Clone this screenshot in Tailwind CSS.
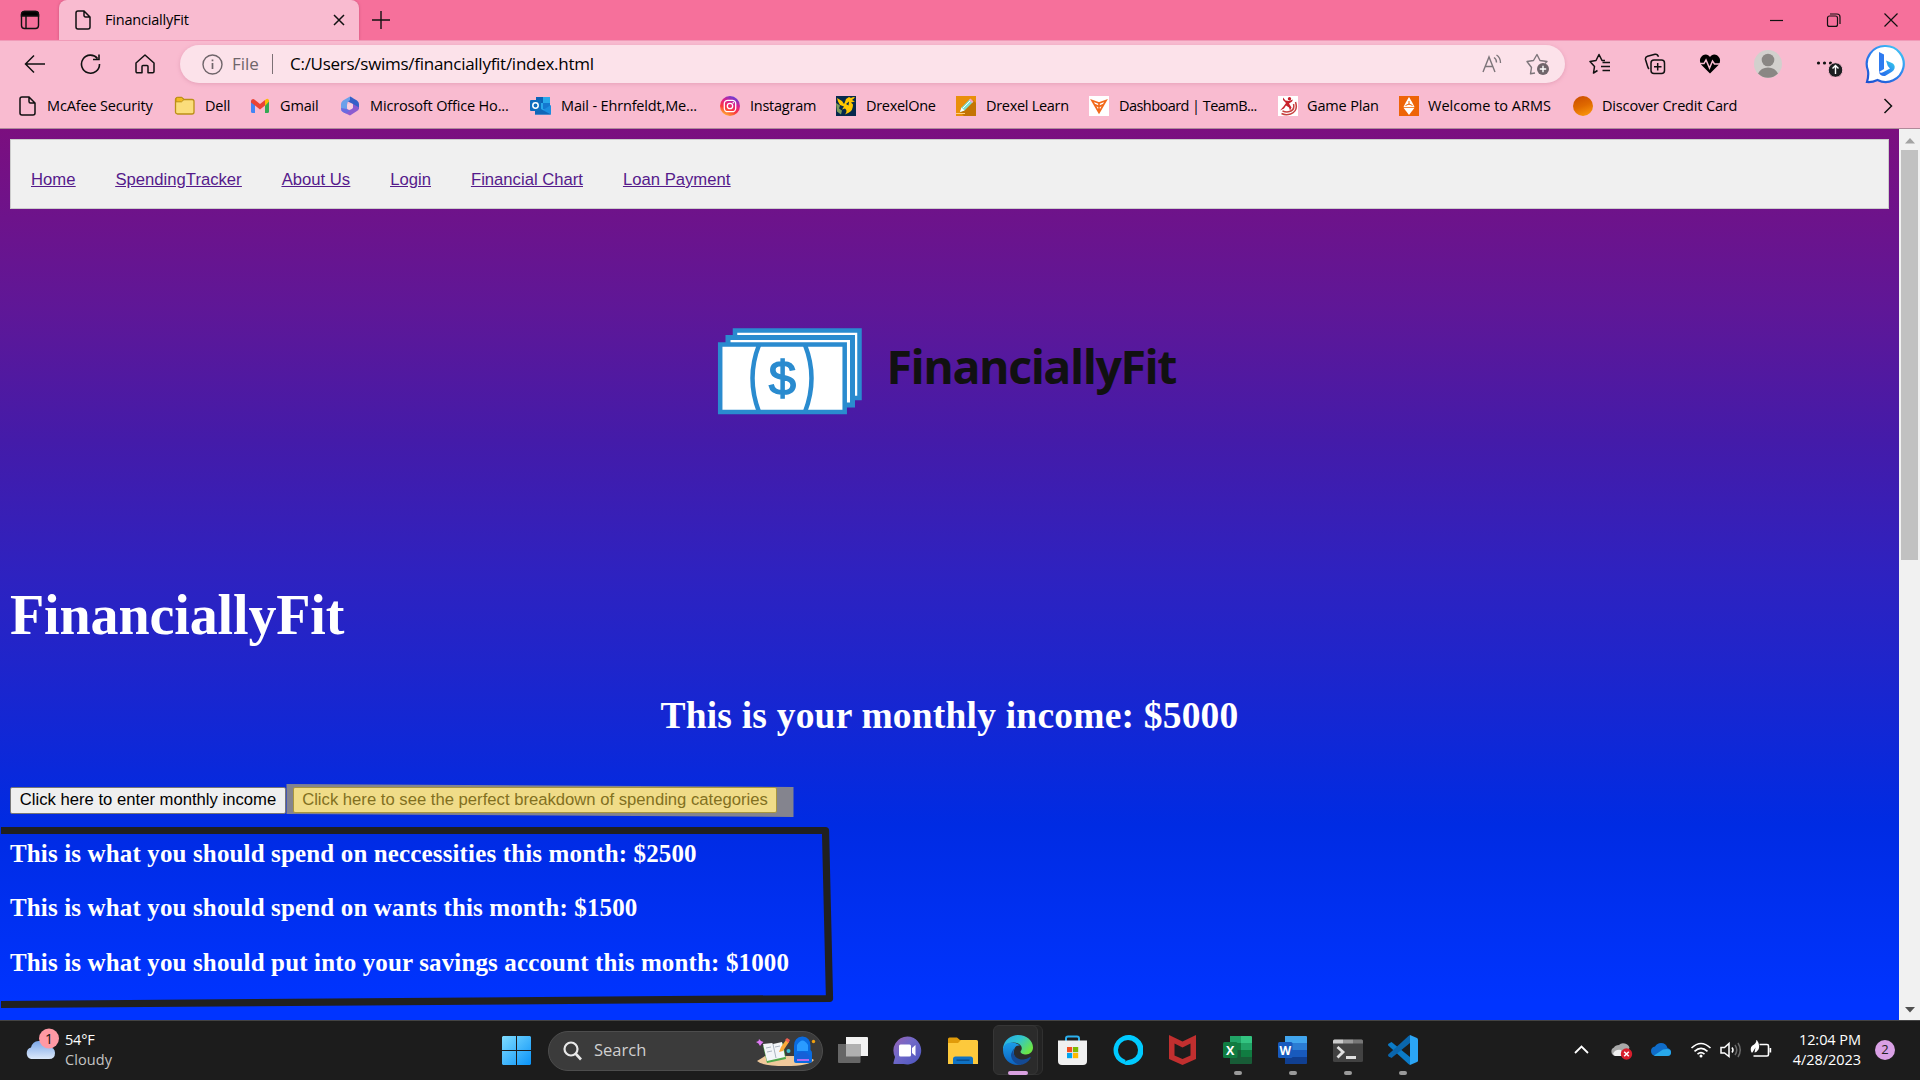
<!DOCTYPE html>
<html lang="en">
<head>
<meta charset="utf-8">
<title>FinanciallyFit</title>
<script src="https://cdn.jsdelivr.net/npm/@tailwindcss/browser@4"></script>
</head>
<body class="w-[1920px] h-[1080px] overflow-hidden flex flex-col font-['Open_Sans',sans-serif] text-black">

<!-- Tab strip -->
<header class="h-10 shrink-0 flex items-center bg-[#f6709b]">
  <div class="w-[59px] flex justify-center pl-px">
    <svg width="20" height="20" viewBox="0 0 20 20" fill="none" stroke="#111" stroke-width="1.4"><rect x="1.5" y="1.5" width="17" height="17" rx="3"/><path d="M1.5 6V4.500a3 3 0 0 1 3-3h11a3 3 0 0 1 3 3V6z" fill="#000"/><path d="M6 6v12.500"/></svg>
  </div>
  <div class="w-[300px] h-full flex items-center bg-[#f9bbd0] rounded-t-lg pl-4 pr-[13px] shadow-[0_0_3px_#c8557a]">
    <svg width="16" height="20" viewBox="0 0 16 20" fill="none" stroke="#111" stroke-width="1.5"><path d="M3 1h6l6 6v10a2 2 0 0 1-2 2H3a2 2 0 0 1-2-2V3a2 2 0 0 1 2-2zM9 1v4.500a1.500 1.500 0 0 0 1.500 1.500H15"/></svg>
    <span class="ml-[14px] text-[14.5px] grow tracking-[-0.2px] pb-px">FinanciallyFit</span>
    <svg width="14" height="12" viewBox="0 0 14 12" stroke="#111" stroke-width="1.5"><path d="M2 1l10 10M12 1L2 11"/></svg>
  </div>
  <svg class="ml-[13px]" width="18" height="18" viewBox="0 0 18 18" stroke="#111" stroke-width="1.4"><path d="M9 0v18M0 9h18"/></svg>
  <div class="ml-auto flex items-center">
    <svg class="w-[57px]" height="14" viewBox="0 0 57 14" stroke="#111" stroke-width="1.2"><path d="M22 7.500h13"/></svg>
    <svg class="w-[57px]" height="14" viewBox="0 0 57 14" fill="none" stroke="#111" stroke-width="1.2"><rect x="22.500" y="3" width="10" height="10.400" rx="2"/><path d="M25 1h7a3 3 0 0 1 3 3v7"/></svg>
    <svg class="w-[58px]" height="14" viewBox="0 0 58 14" stroke="#111" stroke-width="1.2"><path d="M22.500 .5l13 13M35.500 .5l-13 13"/></svg>
  </div>
</header>

<!-- Toolbar and bookmarks -->
<div class="h-[89px] shrink-0 bg-[#f9bbd0] border-t border-t-[#f09bb8] border-b border-b-[#b08a9a] flex flex-col">
  <div class="h-[46px] flex items-center">
    <div class="w-[180px] pl-[24px] flex items-center gap-[34.500px]">
      <svg width="21" height="20" viewBox="0 0 21 20" fill="none" stroke="#111" stroke-width="1.5"><path d="M21 10H1.500M10 1.500L1.500 10l8.500 8.500"/></svg>
      <svg width="21" height="20" viewBox="0 0 21 20" fill="none" stroke="#111" stroke-width="1.6"><path d="M17.500 4.500A9 9 0 1 0 19.500 10M19 .5v5h-6"/></svg>
      <svg width="20" height="20" viewBox="0 0 20 20" fill="none" stroke="#111" stroke-width="1.5"><path d="M1 9L10 1l9 8v8.500a1.200 1.200 0 0 1-1.200 1.200H13V12.500a1 1 0 0 0-1-1H8a1 1 0 0 0-1 1v6.200H2.200A1.200 1.200 0 0 1 1 17.500z" stroke-linejoin="round"/></svg>
    </div>
    <div class="w-[1385px] h-[38px] rounded-full bg-[#fce2ea] shadow-[0_1px_4px_#e5a0b8] flex items-center pl-[22px] pr-[15px] text-[17px]">
      <svg width="21" height="21" viewBox="0 0 21 21" fill="none" stroke="#6f656a" stroke-width="1.4"><circle cx="10.500" cy="10.500" r="9.500"/><path d="M10.500 9v6M10.500 5.500v1.800" stroke-width="1.700"/></svg>
      <span class="ml-[9px] w-[40px] text-[#6f656a]">File</span>
      <span class="w-px h-5 bg-[#7c7075]"></span>
      <span class="ml-[17px] tracking-[-0.27px]">C:/Users/swims/financiallyfit/index.html</span>
      <svg class="ml-auto" width="20" height="20" viewBox="0 0 20 20" fill="none" stroke="#7d757a" stroke-width="1.4"><path d="M1 18L7 3l6 15M3.300 12.500h7.500M12 3.500q2.500 1.500 2.500 5M14.500 1q4 2.500 4 8"/></svg>
      <svg class="ml-[24px]" width="24" height="22" viewBox="0 0 24 22" fill="none" stroke="#7d757a" stroke-width="1.4"><path d="M9 20l-4.500 .8 1-6.300L1 8.500l6.500-1L11 1.500l3 6 7 1-2 2" stroke-linejoin="round"/><circle cx="17" cy="16" r="6" fill="#6f656a" stroke="none"/><path d="M17 12.800v6.400M13.800 16h6.400" stroke="#fff"/></svg>
    </div>
    <div class="grow flex items-center">
      <svg class="ml-[24px]" width="22" height="22" viewBox="0 0 22 22" fill="none" stroke="#111" stroke-width="1.5"><path d="M8.500 17.500l-4 2.500 1-6.500L1 8.500l6-1L10 1.500l3 6h3M13.500 9.500H21M12 13.500h9M13.500 17.500H21" stroke-linejoin="round"/></svg>
      <svg class="ml-[33px]" width="22" height="22" viewBox="0 0 22 22" fill="none" stroke="#111" stroke-width="1.5"><rect x="7" y="7" width="13.500" height="13.500" rx="3"/><path d="M13.700 10v7.500M10 13.700h7.500M5 16Q4 15 3.500 13L1.500 6.500Q1 4 3.500 3.300L11 1.300q2.500-.5 3.500 2.500"/></svg>
      <svg class="ml-[33px]" width="22" height="20" viewBox="0 0 22 20"><path d="M11 19.500L2.500 11Q0 7.500 1.500 4C4-.5 9-.5 11 3c2-3.500 7-3.500 9.500 1q1.500 3.500-1 7z"/><path d="M0 9.500h5l2-3.500 3.500 8 3-7 2 3H22" fill="none" stroke="#f9bbd0" stroke-width="1.500"/></svg>
      <svg class="ml-[33px]" width="28" height="28" viewBox="0 0 28 28"><circle cx="14" cy="14" r="14" fill="#d2d0cd"/><circle cx="14" cy="10" r="6.300" fill="#8a8784"/><path d="M4 23.500Q7 17.500 14 17.500t10 6A14 14 0 0 1 4 23.500z" fill="#8a8784"/></svg>
      <svg class="ml-[34px]" width="27" height="26" viewBox="0 0 27 26"><g fill="#111"><circle cx="2.500" cy="12" r="1.600"/><circle cx="8.500" cy="12" r="1.600"/><circle cx="14.500" cy="12" r="1.600"/></g><circle cx="19.500" cy="19" r="7.300" fill="#1d1f22" stroke="#f9bbd0"/><path d="M19.500 23v-8M16.500 17.500l3-3 3 3" stroke="#fff" stroke-width="1.400" fill="none"/></svg>
      <svg class="ml-[22px]" width="40" height="40" viewBox="0 0 40 40"><defs><linearGradient id="bg1" x1="0" y1="1" x2=".8" y2="0"><stop offset="0" stop-color="#1a4fd0"/><stop offset=".6" stop-color="#2f86f0"/><stop offset="1" stop-color="#3fc4f5"/></linearGradient><linearGradient id="bg2" x1="0" y1="1" x2="1" y2="0"><stop offset="0" stop-color="#2466e8"/><stop offset=".5" stop-color="#2c8df0"/><stop offset="1" stop-color="#35d3e8"/></linearGradient></defs><path d="M20.500 2a18 18 0 1 1-8 34Q7 38.500 2 38q2-7 .8-12A18 18 0 0 1 20.500 2z" fill="#fff" stroke="url(#bg1)" stroke-width="2.200"/><path d="M14 8l5 2.500V25l-5 3z" fill="#2f7bf0"/><path d="M21 16.500l6 2.500q3.500 2 2.500 5.500-.5 2-2.500 3.200L20 32q-5 .5-6-4 2 1.500 4.500 0L25 24.500 22.800 22z" fill="url(#bg2)"/></svg>
    </div>
  </div>
  <div class="h-[38px] pl-[18px] flex items-center text-[14.5px] whitespace-nowrap tracking-[-0.16px]">
    <div class="w-[156px] flex items-center gap-[9px]"><svg width="20" height="20" viewBox="0 0 20 20" fill="none" stroke="#111" stroke-width="1.500"><path d="M4 1h7l6 6v10a2 2 0 0 1-2 2H4a2 2 0 0 1-2-2V3a2 2 0 0 1 2-2zM11 1v4.500a1.500 1.500 0 0 0 1.500 1.500H17"/></svg>McAfee Security</div>
    <div class="w-[76px] flex items-center gap-[10px]"><svg width="21" height="20" viewBox="0 0 21 20"><path d="M1.500 3.500a2 2 0 0 1 2-2h4l2.500 2h8a2 2 0 0 1 2 2V16a2 2 0 0 1-2 2h-14.500a2 2 0 0 1-2-2z" fill="#fbdd7b" stroke="#bc9017" stroke-width="1.300"/><path d="M2 5.800h5.500L10 3.500 7.500 1.500h-4Q2 1.500 2 3z" fill="#f3b820" stroke="#bc9017"/></svg>Dell</div>
    <div class="w-[90px] flex items-center gap-[10px]"><svg width="20" height="20" viewBox="0 0 20 20"><path d="M1 4.500h4V17H2.500A1.500 1.500 0 0 1 1 15.500z" fill="#4285f4"/><path d="M15 4.500h4v11a1.500 1.500 0 0 1-1.500 1.500H15z" fill="#34a853"/><path d="M1 5.500Q1 3 3 3q1 0 2 1l5 4 5-4v5.500l-5 4-5-4-4-3z" fill="#ea4335"/><path d="M15 4q4-3 4 1.500L15 10z" fill="#fbbc04"/></svg>Gmail</div>
    <div class="w-[190px] flex items-center gap-[10px]"><svg width="20" height="20" viewBox="0 0 20 20"><path d="M10 .5L3 4.500Q1 6 1 8v5q0 2 2 3l4 1.500V9q0-3 2-4l4-3z" fill="#6ba0ea"/><path d="M10 .5l7 4Q19 6 19 8v5l-6-2V8L8 5.500 10 4z" fill="#3560c8"/><path d="M19 11.500q0 2.500-2 3.500l-7 4.500L3 16l6-1.500 4-3V8z" fill="#8b5cd0"/><path d="M1 12l6 1 3 1.500-4 3L3 16q-2-1-2-4z" fill="#6a6ae0"/><circle cx="10" cy="10.500" r="3" fill="#f9cfe0"/></svg>Microsoft Office Ho...</div>
    <div class="w-[190px] flex items-center gap-[10px]"><svg width="21" height="20" viewBox="0 0 21 20"><rect x="6" y="1" width="14" height="13" fill="#28a8ea"/><path d="M6 1h7v6H6z" fill="#0a63b8"/><path d="M13 7h7v6h-7z" fill="#1478d0"/><path d="M5 9l8 5 8-5v9.500H5z" fill="#1b8ee0"/><path d="M5 10l16 8.500H5z" fill="#1066b8"/><rect y="4" width="11" height="11" rx="1" fill="#0f6cbd"/><circle cx="5.500" cy="9.500" r="2.700" fill="none" stroke="#fff" stroke-width="1.500"/></svg>Mail - Ehrnfeldt,Me...</div>
    <div class="w-[116px] flex items-center gap-[10px] tracking-[-0.25px]"><svg width="20" height="20" viewBox="0 0 20 20"><defs><linearGradient id="ig" x1=".2" y1="1" x2=".7" y2="0"><stop offset="0" stop-color="#ffc531"/><stop offset=".35" stop-color="#fb3a3a"/><stop offset=".65" stop-color="#e0218a"/><stop offset="1" stop-color="#5b3fe0"/></linearGradient></defs><circle cx="10" cy="10" r="10" fill="url(#ig)"/><rect x="4.300" y="4.300" width="11.400" height="11.400" rx="3.500" fill="none" stroke="#fff" stroke-width="1.300"/><circle cx="10" cy="10" r="2.700" fill="none" stroke="#fff" stroke-width="1.300"/><circle cx="13.300" cy="6.700" r=".8" fill="#fff"/></svg>Instagram</div>
    <div class="w-[120px] flex items-center gap-[10px] tracking-[-0.3px]"><svg width="20" height="20" viewBox="0 0 20 20"><path d="M0 0h20v20H0z" fill="#07294d"/><path d="M1 2l5 3 2 3 1-2 1-3 3-2 2 1q3-1.500 4-.5l-3 2.500 3 1.500-4 1 2 2q0 6-4 8l-4 2q3-4 0-6l-3 1 2-3-4-1.500-2-3.500z" fill="#ffc600"/><path d="M0 7l4 2.500-1 3 3 2-1 4-4-3z" fill="#7d9a5a"/><path d="M10 8l3-2.500-.5 4z" fill="#07294d"/></svg>DrexelOne</div>
    <div class="w-[133px] flex items-center gap-[10px] tracking-[-0.3px]"><svg width="20" height="20" viewBox="0 0 20 20"><path d="M0 0h20v20H0z" fill="#e98f0a"/><path d="M4 16L17 4l3 3v13H8z" fill="#c47403"/><path d="M4 16l1.500-4.500L14 3l3 3-8.500 8.500z" fill="#7fe0d0"/><path d="M13 4l1.500-1.500 3 3L16 7z" fill="#f3a5c8"/><path d="M7 12l7-7" stroke="#fff"/><path d="M4 16l1.500-4.500L8.500 14.500z" fill="#fff"/><path d="M0 17.500h9" stroke="#ffd080" stroke-width="1"/></svg>Drexel Learn</div>
    <div class="w-[189px] flex items-center gap-[10px] tracking-[-0.55px]"><svg width="20" height="20" viewBox="0 0 20 20"><path d="M0 0h20v20H0z" fill="#fff"/><path d="M3 4.500l7 2.500 7-2.500-7 12zM10 7v3.500M5.500 8.500l4.500 2 4.500-2M10 10.500v4" fill="none" stroke="#f26a1b" stroke-width="1.700"/></svg>Dashboard | TeamB...</div>
    <div class="w-[121px] flex items-center gap-[9px]"><svg width="20" height="20" viewBox="0 0 20 20"><path d="M0 0h20v20H0z" fill="#fff"/><circle cx="11.500" cy="2.800" r="1.700" fill="#c8202a"/><path d="M5 1.500l2.500 3L11 5l4-1.500-1 2-3 2 2.500 4-1.500 3-1-3-3-2-2 3-4 2 3.500-4L8 7 5 4z" fill="#c8202a"/><path d="M17.500 6q3 9-5 12-5 1.500-9-.5M15.500 8q1.500 6-4 7.500-3 1-7-.5" fill="none" stroke="#c8403f" stroke-width="1.500"/></svg>Game Plan</div>
    <div class="w-[174px] flex items-center gap-[9px] tracking-[0px]"><svg width="20" height="20" viewBox="0 0 20 20"><path d="M0 0h20v20H0z" fill="#ee6407"/><path d="M10 1l3 5 2.500 5H4.500L7 6z" fill="#fff"/><path d="M4.500 11.800h11L10 19z" fill="#fff"/><path d="M10 5v4M6.500 9.500L10 8l3.500 1.500" stroke="#ee6407" fill="none"/></svg>Welcome to ARMS</div>
    <div class="flex items-center gap-[9px]"><span class="w-5 h-5 rounded-full bg-linear-160 from-[#c94a00] via-[#e06a00] to-[#ffa010]"></span>Discover Credit Card</div>
    <svg class="ml-auto mr-[27px]" width="10" height="16" viewBox="0 0 10 16" fill="none" stroke="#111" stroke-width="1.500"><path d="M1.500 1l7 7-7 7"/></svg>
  </div>
</div>

<!-- Web page -->
<div class="h-[891px] shrink-0 flex">
  <main class="relative w-[1899px] px-[10px] pt-[10px] flex flex-col items-start text-white font-['Liberation_Serif',serif] font-bold bg-[linear-gradient(to_bottom,#7b0f7f_0%,#5f1797_20%,#441ba9_35%,#2e22c0_50%,#1f25cb_60%,#0a29db_72%,#002be3_78%,#0031f5_91%,#0034ff_98%)]">
    <nav class="w-full h-[70px] shrink-0 bg-[#f0f0f0] border border-[#ccc] pl-5 pt-[30px] flex gap-10 font-['Liberation_Sans',sans-serif] font-normal text-[16.67px] leading-5 text-[#551a8b] underline">
      <a>Home</a><a>SpendingTracker</a><a>About Us</a><a>Login</a><a>Financial Chart</a><a>Loan Payment</a>
    </nav>
    <svg class="mt-[119px] ml-[708px] shrink-0 overflow-visible" width="470" height="90" viewBox="0 0 470 90">
      <g fill="#fff" stroke="#2a8bcf" stroke-width="4.500">
        <path d="M17 2.500h124.500V70H17z"/>
        <path d="M10 9.500h124.500V77H10z" stroke-width="5"/>
        <path d="M2.200 16.500h124.500v67.500H2.200z"/>
        <path d="M41 17q-13 33 0 67M87 17q13 33 0 67" fill="none"/>
      </g>
      <text x="64.500" y="67" text-anchor="middle" font-family="Liberation Sans" font-weight="400" font-size="49" fill="#2a8bcf" stroke="#2a8bcf" stroke-width="1.500">$</text>
      <text x="168.500" y="56" textLength="291" lengthAdjust="spacing" font-family="Open Sans" font-weight="700" font-size="46.500" fill="#111">FinanciallyFit</text>
    </svg>
    <h1 class="mt-[165px] text-[56px] leading-[64px] h-16 tracking-[-0.12px]">FinanciallyFit</h1>
    <h2 class="mt-[48px] w-full text-center text-[37.5px] leading-[42px] tracking-[0.2px]">This is your monthly income: $5000</h2>
    <div class="mt-[50px] h-[27px] flex gap-[7px] font-['Liberation_Sans',sans-serif] font-normal text-[16.67px] leading-[22px]">
      <button class="w-[276px] bg-[#efefef] text-black border border-[#767676] rounded-xs whitespace-nowrap pb-[2px]">Click here to enter monthly income</button>
      <div class="relative">
        <svg class="absolute left-[-7px] top-[-3px]" width="508" height="34" viewBox="0 0 508 34"><path d="M.5 0l507 3v30L.5 30z" fill="#84848e"/></svg>
        <button class="relative w-[484px] h-[26px] bg-[#f0dc88] text-[#82701f] border border-[#a8963f] rounded-xs whitespace-nowrap pb-[1px]">Click here to see the perfect breakdown of spending categories</button>
      </div>
    </div>
    <div class="mt-[26px] flex flex-col gap-[26px] text-[25px] leading-[28px] tracking-[0.14px]">
      <h3>This is what you should spend on neccessities this month: $2500</h3>
      <h3>This is what you should spend on wants this month: $1500</h3>
      <h3 class="pt-px">This is what you should put into your savings account this month: $1000</h3>
    </div>
    <svg class="absolute left-0 top-[691px]" width="840" height="195" viewBox="0 0 840 195" fill="none" stroke="#202020" stroke-width="7.200" stroke-linejoin="round"><path d="M1 10.500L825.500 10.500 829.500 178.500 1 184.500"/></svg>
  </main>
  <div class="w-[21px] bg-[#f1f1f1] flex flex-col items-center">
    <svg class="h-[21px]" width="10" viewBox="0 0 10 21"><path d="M0 14.500L5 9l5 5.500z" fill="#a3a3a3"/></svg>
    <div class="w-[17px] h-[410px] bg-[#c1c1c1]"></div>
    <svg class="mt-auto h-[21px]" width="10" viewBox="0 0 10 21"><path d="M0 8h10l-5 5.500z" fill="#505050"/></svg>
  </div>
</div>

<!-- Taskbar -->
<footer class="h-[60px] shrink-0 bg-[#1c1c1c] border-t border-t-[#444] flex items-center text-white">
  <div class="w-[489px] pl-[25px] pb-[2px] flex items-center">
    <svg class="shrink-0 overflow-visible" width="35" height="40" viewBox="0 0 35 40"><defs><linearGradient id="cl" x1="0" y1="0" x2="0" y2="1"><stop offset="0" stop-color="#7ba7e8"/><stop offset="1" stop-color="#dbe8fa"/></linearGradient></defs><path d="M6 29a6 6 0 0 1 0-11.500Q8 10 15 11q6 0 8 6 7 0 7 6t-6 6z" fill="url(#cl)"/><circle cx="24" cy="8.500" r="10" fill="#ff99a4"/><text x="24" y="13.500" text-anchor="middle" font-size="14" font-family="Open Sans" fill="#111">1</text></svg>
    <div class="ml-[5px] text-[14.5px] leading-5 tracking-[-0.2px]"><div>54°F</div><div class="text-[#c4c4c4] tracking-[0.1px]">Cloudy</div></div>
  </div>
  <div class="w-[59px] pl-[13px]"><svg width="29" height="29" viewBox="0 0 29 29"><defs><linearGradient id="win" gradientUnits="userSpaceOnUse" x1="0" y1="0" x2="29" y2="29"><stop offset="0" stop-color="#7fdcff"/><stop offset="1" stop-color="#0a93f8"/></linearGradient></defs><path d="M1 0h13v14H0V1zM15 0h13l1 1v13H15zM0 15h14v14H1l-1-1zM15 15h14v13l-1 1H15z" fill="url(#win)"/></svg></div>
  <div class="w-[275px] h-10 rounded-full bg-[#3b3b3b] border border-[#4d4d4d] pl-[14px] pr-[6px] flex items-center">
    <svg width="20" height="20" viewBox="0 0 20 20" fill="none" stroke="#e8e8e8" stroke-width="2.200"><circle cx="8" cy="8" r="6.500"/><path d="M12.500 12.500l5.500 6" stroke-width="2.600"/></svg>
    <span class="ml-[11px] text-[16.5px] text-[#d0d0d0]">Search</span>
    <svg class="ml-auto" width="60" height="32" viewBox="0 0 60 32"><path d="M1 26l8-5h42l7 4q-5 6-28 6Q6 31 1 26z" fill="#f0c99b"/><path d="M3 4l2 2 2.500 1L5.500 9 4 11 2.500 8.500 0 7l2.500-1z" fill="#e07af5"/><path d="M7 11l20-3 3 16-19 4z" fill="#4fa84a"/><path d="M7 9l9-1 1 1 9-2 3 15-9 2-9 2z" fill="#f3f5f8"/><path d="M17 9l3 14M10 13l5-1M11 17l5-1M19 12l5-1" stroke="#aab4c0" fill="none"/><path d="M25 12l5-7 3 2-6 9-4 1z" fill="#f9a93a"/><path d="M29 5l2-2 3 2-1.500 3z" fill="#f06050"/><path d="M38 11Q38 2 46.500 1.500 54.500 2 54.500 11v4q1.500 1 1.500 3v8q0 2-2 2H40q-2 0-2-2z" fill="#0a6be0"/><path d="M41 10q5.500-9 11 0v6H41z" fill="#2a9bff"/><path d="M39.500 21q7-9 14 0v5h-14z" fill="#1560d8"/><path d="M41 25h12" stroke="#b06cf5" stroke-width="2"/><circle cx="57.500" cy="6.500" r="1.700" fill="#f0a010"/><circle cx="32.500" cy="16" r="2" fill="#3cc0d0"/></svg>
  </div>
  <div class="ml-[2px] pb-px h-full flex [&>div]:w-[55px] [&>div]:relative [&>div]:flex [&>div]:items-center [&>div]:justify-center">
    <div><svg width="30" height="28" viewBox="0 0 30 28"><path d="M8 1h21a1 1 0 0 1 1 1v18H8z" fill="#f2f2f2"/><path d="M0 8h22.500v18a1 1 0 0 1-1 1H1a1 1 0 0 1-1-1z" fill="#666"/><path d="M8 8h14.500v12.500H8z" fill="#b0b0b0"/></svg></div>
    <div><svg width="29" height="29" viewBox="0 0 29 29"><defs><linearGradient id="ch" x1="0" y1="0" x2="1" y2="1"><stop offset="0" stop-color="#9a60b0"/><stop offset=".4" stop-color="#7269c8"/><stop offset="1" stop-color="#4a55c0"/></linearGradient></defs><path d="M14.500 .5a14 14 0 1 1-4 27.500H1q-1 0-.5-1.500L2 21A14 14 0 0 1 14.500 .5z" fill="url(#ch)"/><rect x="6" y="8.500" width="12" height="12" rx="1.500" fill="#fff"/><path d="M19 12l3.500-3v11L19 17z" fill="#fff"/></svg></div>
    <div><svg width="30" height="27" viewBox="0 0 30 27"><path d="M0 2a1.500 1.500 0 0 1 1.500-1.500H9L12 3h11v6H0z" fill="#e09b0a"/><path d="M0 6h10l3-3h15.500A1.500 1.500 0 0 1 30 4.500V27H0z" fill="#fdc93c"/><path d="M5 27v-5q0-2.500 2.500-2.500h15q2.500 0 2.500 2.500v5z" fill="#0f72c4"/><path d="M8.500 23.200h13" stroke="#0a4c8c" stroke-width="1.500"/></svg></div>
    <div>
      <span class="absolute left-[9px] top-[4px] w-[44px] h-[50px] rounded-md bg-[#232323] border border-[#303030]"></span>
      <span class="absolute left-[3px] top-[4px] w-[45px] h-[50px] rounded-md bg-[#2b2b2b] border border-[#363636]"></span>
      <svg class="relative" width="30" height="30" viewBox="0 0 30 30"><defs><linearGradient id="eg1" x1="0" y1="0" x2="1" y2=".6"><stop offset="0" stop-color="#27a8e8"/><stop offset=".5" stop-color="#30c5d0"/><stop offset="1" stop-color="#6be545"/></linearGradient><linearGradient id="eg2" x1="0" y1="0" x2="0" y2="1"><stop offset="0" stop-color="#1b9de8"/><stop offset="1" stop-color="#0c62c0"/></linearGradient></defs><path d="M0 13C1 5 8 0 15 0c9 0 15 6 15 12.500 0 4-3 7-7 7-3 0-5.500-1.200-5.500-2.800 0-.8 1.300-1.200 1.300-3.700C18.500 9 12 6 6 8.500Q1.500 10.500 0 15z" fill="url(#eg1)"/><path d="M0 15C0 10 4 7 9 7.500q5 .5 8 3-5-.5-6 5-1 8 6 12.500L18 29.700Q16 30 15 30C7 30 0 24 0 15z" fill="url(#eg2)"/><path d="M10.700 15.500C9.500 22 16 25 20.500 24.500q3.500-.3 6.500-2.500 1 0 .7 1Q24 29.500 16 30 9 27 8 21 8 16 12.500 12.500q-1.500 1-1.800 3z" fill="#144a94"/></svg>
      <span class="absolute bottom-[4px] w-5 h-1 rounded-full bg-[#d9a0e0]"></span>
    </div>
    <div><svg width="29" height="30" viewBox="0 0 29 30"><path d="M8 7V3.500q0-2 2-2h9q2 0 2 2V7" fill="none" stroke="#2cb0ee" stroke-width="2"/><path d="M0 5.500h29V26a4 4 0 0 1-4 4H4a4 4 0 0 1-4-4z" fill="#f0f0f0"/><path d="M9 12h5.200v5.200H9z" fill="#f25022"/><path d="M15 12h5.200v5.200H15z" fill="#7fba00"/><path d="M9 18h5.200v5.200H9z" fill="#00a4ef"/><path d="M15 18h5.200v5.200H15z" fill="#ffb900"/></svg></div>
    <div><svg width="30" height="30" viewBox="0 0 30 30"><path d="M12.500 30v-3q0-1.500 3-2Q25 23 25 15A10 10 0 1 0 5 15q0 7 7.500 10v4.700A15 15 0 1 1 15 30z" fill="#00caff"/></svg></div>
    <div><svg width="27" height="30" viewBox="0 0 27 30"><path d="M0 0l13.500 6.500L27 0v24l-13.500 6L0 24zM5.500 8.500v12l8 3.500 8-3.500v-12l-8 4z" fill="#c12f2f" fill-rule="evenodd"/></svg></div>
    <div><svg width="29" height="28" viewBox="0 0 29 28"><path d="M7 0h11v7H7z" fill="#21a366"/><path d="M18 0h10q1 0 1 1v6H18z" fill="#33c481"/><path d="M7 7h11v7H7z" fill="#107c41"/><path d="M18 7h11v7H18z" fill="#21a366"/><path d="M7 14h11v7H7z" fill="#185c37"/><path d="M18 14h11v7H18z" fill="#107c41"/><path d="M7 21h22v6q0 1-1 1H7z" fill="#185c37"/><rect y="6" width="14.500" height="16" rx="1.500" fill="#107c41"/><text x="7.200" y="18.500" text-anchor="middle" font-family="Open Sans" font-weight="700" font-size="12.500" fill="#fff">X</text></svg><span class="absolute bottom-[4px] w-2 h-1 rounded-full bg-[#9a9a9a]"></span></div>
    <div><svg width="29" height="28" viewBox="0 0 29 28"><path d="M7 0h21q1 0 1 1v6H7z" fill="#41a5ee"/><path d="M7 7h22v7H7z" fill="#2b7cd3"/><path d="M7 14h22v7H7z" fill="#185abd"/><path d="M7 21h22v6q0 1-1 1H7z" fill="#103f91"/><rect y="6" width="14.500" height="16" rx="1.500" fill="#185abd"/><text x="7.300" y="18.500" text-anchor="middle" font-family="Open Sans" font-weight="700" font-size="12" fill="#fff">W</text></svg><span class="absolute bottom-[4px] w-2 h-1 rounded-full bg-[#9a9a9a]"></span></div>
    <div><svg width="30" height="23" viewBox="0 0 30 23"><rect y=".5" width="30" height="22.500" rx="1.500" fill="#424242"/><path d="M0 4.500V2Q0 .5 1.500 .5H10v4z" fill="#ccc"/><path d="M10 .5h10v4H10z" fill="#999"/><path d="M20 .5h8.500Q30 .5 30 2v2.500H20z" fill="#777"/><path d="M4.500 8l5.500 5-5.500 5.500M13 18.500h10" fill="none" stroke="#e0e0e0" stroke-width="2.800"/></svg><span class="absolute bottom-[4px] w-2 h-1 rounded-full bg-[#9a9a9a]"></span></div>
    <div><svg width="30" height="30" viewBox="0 0 30 30"><path d="M22 22L3.500 7 .5 8.800q-1 1 0 2L20.500 29 22 30z" fill="#0b7bc8"/><path d="M22 8L3.500 23 .5 21.200q-1-1 0-2L20.500 1 22 0z" fill="#0a66ad"/><path d="M22 0l7 3q1 .5 1 1.500V25.500q0 1-1 1.500l-7 3z" fill="#2ba5f5"/></svg><span class="absolute bottom-[4px] w-2 h-1 rounded-full bg-[#9a9a9a]"></span></div>
  </div>
  <div class="ml-auto pr-[25px] pb-px flex items-center">
    <svg class="w-10" height="20" viewBox="0 0 40 20" fill="none" stroke="#fff" stroke-width="1.800"><path d="M14 13l6.500-6.500L27 13"/></svg>
    <svg class="w-10" height="20" viewBox="0 0 40 20"><path d="M14 16a4.500 4.500 0 0 1-1-8.500Q14 5 18 5q2-2.500 6-1.500 4 1 4.500 4.500L22 16z" fill="#a8a8a8"/><path d="M12 14q2-5 8-4l2 6h-8z" fill="#f0f0f0"/><circle cx="25.500" cy="14" r="5.700" fill="#d81e2c"/><path d="M23.200 11.700l4.600 4.600M27.800 11.700l-4.600 4.600" stroke="#fff" stroke-width="1.500"/></svg>
    <svg class="w-10" height="20" viewBox="0 0 40 20"><path d="M10 11q0-4 4-4.500Q16 3 20 3q5 0 6.500 5Q30 9 30 12q0 4-4 4H14q-4-1-4-5z" fill="#0f6cc9"/><path d="M13 15.500L22 9.500q8-2 8 3 0 3.500-4 3.500H14z" fill="#28a8ea"/></svg>
    <svg class="w-[30px] ml-[5px]" height="20" viewBox="0 0 30 20" fill="none" stroke="#fff" stroke-width="1.600"><path d="M5.500 8q9.500-9 19 0M8.500 11.300q6.500-6 13 0M11.500 14.200q3.500-3 7 0"/><circle cx="15" cy="16" r="1.500" fill="#fff" stroke="none"/></svg>
    <svg class="w-[30px]" height="20" viewBox="0 0 30 20" fill="none" stroke="#fff" stroke-width="1.500"><path d="M5 7.500h3.500L13 3.500v13L8.500 13H5zM16 7.500q2 2.500 0 5"/><path d="M19 5q3.500 5 0 10M22 3q4.500 7 0 14" stroke="#6a6a6a"/></svg>
    <svg class="w-[30px]" height="20" viewBox="0 0 30 20"><path d="M13.500 4.500H21Q22.500 4.500 22.500 6v8.500q0 1.500-1.500 1.500H7.500" fill="none" stroke="#fff" stroke-width="1.600"/><path d="M23.500 8h1.700v4.500h-1.700z" fill="#fff"/><path d="M5.500 12.500q-2-5 1-7 4-2 4-6 4 5 2 10-2 3-4 3l1-5-3 5z" fill="#fff"/></svg>
    <div class="w-[85px] text-right text-[14.5px] leading-5 whitespace-nowrap tracking-[-0.05px] pb-[1px]"><div>12:04 PM</div><div>4/28/2023</div></div>
    <span class="ml-[14px] w-5 h-5 rounded-full bg-[#d9a0e5] text-[#222] text-[13px] flex items-center justify-center">2</span>
  </div>
</footer>
</body>
</html>
